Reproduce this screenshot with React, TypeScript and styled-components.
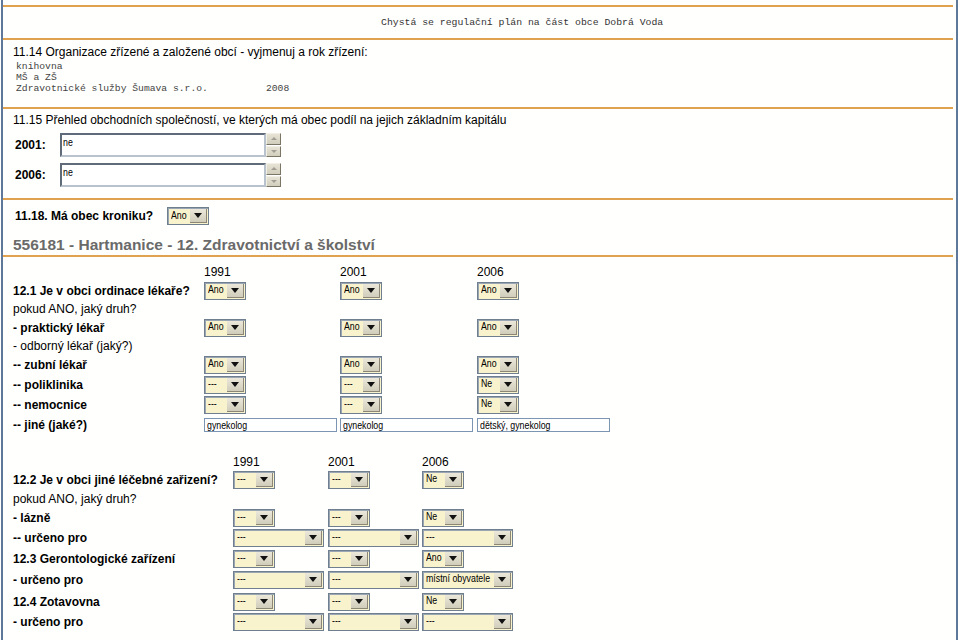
import React from "react";
import styled, { createGlobalStyle } from "styled-components";

const GlobalStyle = createGlobalStyle`
  html, body {
    margin: 0;
    padding: 0;
    background: #ffffff;
  }
  body {
    font-family: "Liberation Sans", Arial, sans-serif;
    color: #000;
  }
`;

const Page = styled.div`
  margin-left: 1px;
  width: 953px;
  min-height: 700px;
  border-left: 2px solid #5d7898;
  border-right: 2px solid #5d7898;
  background: #fffffd;
  padding-top: 5px;
`;

const Rule = styled.div`
  height: 2px;
  margin-right: 3px;
  background: #e0a24e;
`;

const Note = styled.div`
  height: 31px;
  display: flex;
  align-items: center;
  padding-left: 378px;
  font-family: "Liberation Mono", "Courier New", monospace;
  font-size: 9.8px;
  color: #333;
`;

const Section = styled.div<{ $pt?: number; $h: number }>`
  height: ${(p) => p.$h}px;
  padding-top: ${(p) => p.$pt ?? 0}px;
  padding-left: 10px;
  box-sizing: border-box;
`;

const Title = styled.div`
  font-size: 12px;
  line-height: 16px;
`;

const Mono = styled.pre`
  margin: 1px 0 0 3px;
  font-family: "Liberation Mono", "Courier New", monospace;
  font-size: 9.7px;
  line-height: 11px;
  color: #444;
  white-space: pre;
`;

const LineBox = styled.div<{ $mt: number; $h?: number }>`
  display: flex;
  align-items: center;
  margin-top: ${(p) => p.$mt}px;
  height: ${(p) => p.$h ?? 24}px;
`;

const BoldLabel = styled.div<{ $w: number }>`
  width: ${(p) => p.$w}px;
  flex: none;
  padding-left: 2px;
  box-sizing: border-box;
  font-size: 12px;
  font-weight: bold;
`;

/* narrow field text (Arial Narrow look) */
const Narrow = styled.span`
  display: inline-block;
  font-size: 11px;
  transform: scaleX(0.8);
  transform-origin: left center;
  white-space: nowrap;
`;

const AreaWrap = styled.div`
  display: flex;
  height: 24px;
`;

const Area = styled.div`
  width: 201px;
  height: 20px;
  border: 2px solid;
  border-color: #5f6b78 #b9c3cd #b9c3cd #5f6b78;
  background: #fff;
  padding: 0 0 0 1px;
  line-height: 11px;
`;

const Scroll = styled.div`
  width: 15px;
  display: flex;
  flex-direction: column;
  gap: 1px;
  background: #fff;
`;

const ScrollBtn = styled.div`
  flex: 1;
  background: linear-gradient(#e7e4d6, #d2cebd);
  border: 1px solid;
  border-color: #f2f0e6 #7a7564 #7a7564 #f2f0e6;
  display: flex;
  align-items: center;
  justify-content: center;
`;

const Heading = styled.div`
  font-size: 15.5px;
  font-weight: bold;
  color: #6a6a6a;
  line-height: 20px;
  padding-left: 10px;
  margin-top: 3px;
`;

const Table = styled.div<{ $cols: string; $mt: number }>`
  display: grid;
  grid-template-columns: ${(p) => p.$cols};
  margin-top: ${(p) => p.$mt}px;
  padding-left: 10px;
`;

const Cell = styled.div<{ $h: number; $bold?: boolean }>`
  height: ${(p) => p.$h}px;
  display: flex;
  align-items: center;
  font-size: 12px;
  font-weight: ${(p) => (p.$bold ? "bold" : "normal")};
  white-space: nowrap;
`;

const SelectBox = styled.div<{ $w: number }>`
  width: ${(p) => p.$w}px;
  height: 18px;
  box-sizing: border-box;
  display: flex;
  border: 1px solid #6f7f90;
  box-shadow: inset 1px 1px 0 #9aa6b3;
  background: #f8f3cd;
`;

const SelectText = styled.div`
  flex: 1;
  line-height: 12px;
  padding: 0 0 0 3px;
  overflow: hidden;
`;

const Arrow = styled.div`
  width: 16px;
  flex: none;
  margin: 1px 1px 1px 0;
  background: linear-gradient(#ebe8da, #d1cdbb);
  border-right: 1px solid #8b8675;
  border-bottom: 1px solid #8b8675;
  display: flex;
  align-items: center;
  justify-content: center;
`;

const TextInput = styled.div`
  width: 133px;
  height: 14px;
  box-sizing: border-box;
  border: 1px solid #7b95b3;
  background: #fff;
  line-height: 12px;
  padding-left: 2px;
  overflow: hidden;
`;

const SmallTri = styled.svg`
  opacity: 0.35;
`;

const Select = ({ value, w = 42 }: { value: string; w?: number }) => (
  <SelectBox $w={w}>
    <SelectText>
      <Narrow>{value}</Narrow>
    </SelectText>
    <Arrow>
      <svg width="8" height="5" viewBox="0 0 8 5">
        <path d="M0 0 L8 0 L4 5 Z" fill="#111" />
      </svg>
    </Arrow>
  </SelectBox>
);

const Input = ({ value }: { value: string }) => (
  <TextInput>
    <Narrow>{value}</Narrow>
  </TextInput>
);

const TextArea = ({ value }: { value: string }) => (
  <AreaWrap>
    <Area>
      <Narrow>{value}</Narrow>
    </Area>
    <Scroll>
      <ScrollBtn>
        <SmallTri width="6" height="3" viewBox="0 0 6 3">
          <path d="M0 3 L6 3 L3 0 Z" fill="#333" />
        </SmallTri>
      </ScrollBtn>
      <ScrollBtn>
        <SmallTri width="6" height="3" viewBox="0 0 6 3">
          <path d="M0 0 L6 0 L3 3 Z" fill="#333" />
        </SmallTri>
      </ScrollBtn>
    </Scroll>
  </AreaWrap>
);

type Row = {
  label: string;
  bold?: boolean;
  h: number;
  cells?: React.ReactNode[];
};

const rows1: Row[] = [
  { label: "", h: 18, cells: ["1991", "2001", "2006"] },
  { label: "12.1 Je v obci ordinace lékaře?", bold: true, h: 19, cells: [<Select value="Ano" />, <Select value="Ano" />, <Select value="Ano" />] },
  { label: "pokud ANO, jaký druh?", h: 18 },
  { label: "- praktický lékař", bold: true, h: 19, cells: [<Select value="Ano" />, <Select value="Ano" />, <Select value="Ano" />] },
  { label: "- odborný lékař (jaký?)", h: 18 },
  { label: "-- zubní lékař", bold: true, h: 19, cells: [<Select value="Ano" />, <Select value="Ano" />, <Select value="Ano" />] },
  { label: "-- poliklinika", bold: true, h: 21, cells: [<Select value="---" />, <Select value="---" />, <Select value="Ne" />] },
  { label: "-- nemocnice", bold: true, h: 20, cells: [<Select value="---" />, <Select value="---" />, <Select value="Ne" />] },
  { label: "-- jiné (jaké?)", bold: true, h: 20, cells: [<Input value="gynekolog" />, <Input value="gynekolog" />, <Input value="dětský, gynekolog" />] },
];

const rows2: Row[] = [
  { label: "", h: 19, cells: ["1991", "2001", "2006"] },
  { label: "12.2 Je v obci jiné léčebné zařizení?", bold: true, h: 18, cells: [<Select value="---" />, <Select value="---" />, <Select value="Ne" />] },
  { label: "pokud ANO, jaký druh?", h: 19 },
  { label: "- lázně", bold: true, h: 19, cells: [<Select value="---" />, <Select value="---" />, <Select value="Ne" />] },
  { label: "-- určeno pro", bold: true, h: 21, cells: [<Select value="---" w={91} />, <Select value="---" w={91} />, <Select value="---" w={91} />] },
  { label: "12.3 Gerontologické zařízení", bold: true, h: 21, cells: [<Select value="---" />, <Select value="---" />, <Select value="Ano" />] },
  { label: "- určeno pro", bold: true, h: 22, cells: [<Select value="---" w={91} />, <Select value="---" w={91} />, <Select value="místní obyvatele" w={91} />] },
  { label: "12.4 Zotavovna", bold: true, h: 21, cells: [<Select value="---" />, <Select value="---" />, <Select value="Ne" />] },
  { label: "- určeno pro", bold: true, h: 20, cells: [<Select value="---" w={91} />, <Select value="---" w={91} />, <Select value="---" w={91} />] },
];

const QTable = ({ rows, cols, mt }: { rows: Row[]; cols: string; mt: number }) => (
  <Table $cols={cols} $mt={mt}>
    {rows.map((r, i) => (
      <React.Fragment key={i}>
        <Cell $h={r.h} $bold={r.bold}>{r.label}</Cell>
        {[0, 1, 2].map((c) => (
          <Cell $h={r.h} key={c}>
            {r.cells ? r.cells[c] : null}
          </Cell>
        ))}
      </React.Fragment>
    ))}
  </Table>
);

export default function App() {
  return (
    <>
      <GlobalStyle />
      <Page>
        <Rule />
        <Note>Chystá se regulační plán na část obce Dobrá Voda</Note>
        <Rule />
        <Section $h={67} $pt={4}>
          <Title>11.14 Organizace zřízené a založené obcí - vyjmenuj a rok zřízení:</Title>
          <Mono>{"knihovna\nMŠ a ZŠ\nZdravotnické služby Šumava s.r.o.          2008"}</Mono>
        </Section>
        <Rule />
        <Section $h={89} $pt={3}>
          <Title>11.15 Přehled obchodních společností, ve kterých má obec podíl na jejich základním kapitálu</Title>
          <LineBox $mt={5}>
            <BoldLabel $w={47}>2001:</BoldLabel>
            <TextArea value="ne" />
          </LineBox>
          <LineBox $mt={6}>
            <BoldLabel $w={47}>2006:</BoldLabel>
            <TextArea value="ne" />
          </LineBox>
        </Section>
        <Rule />
        <Section $h={32}>
          <LineBox $mt={0} $h={32}>
            <BoldLabel $w={154}>11.18. Má obec kroniku?</BoldLabel>
            <Select value="Ano" />
          </LineBox>
        </Section>
        <Heading>556181 - Hartmanice - 12. Zdravotnictví a školství</Heading>
        <Rule />
        <QTable rows={rows1} cols="191px 136px 137px 137px" mt={6} />
        <QTable rows={rows2} cols="220px 95px 94px 100px" mt={17} />
      </Page>
    </>
  );
}
